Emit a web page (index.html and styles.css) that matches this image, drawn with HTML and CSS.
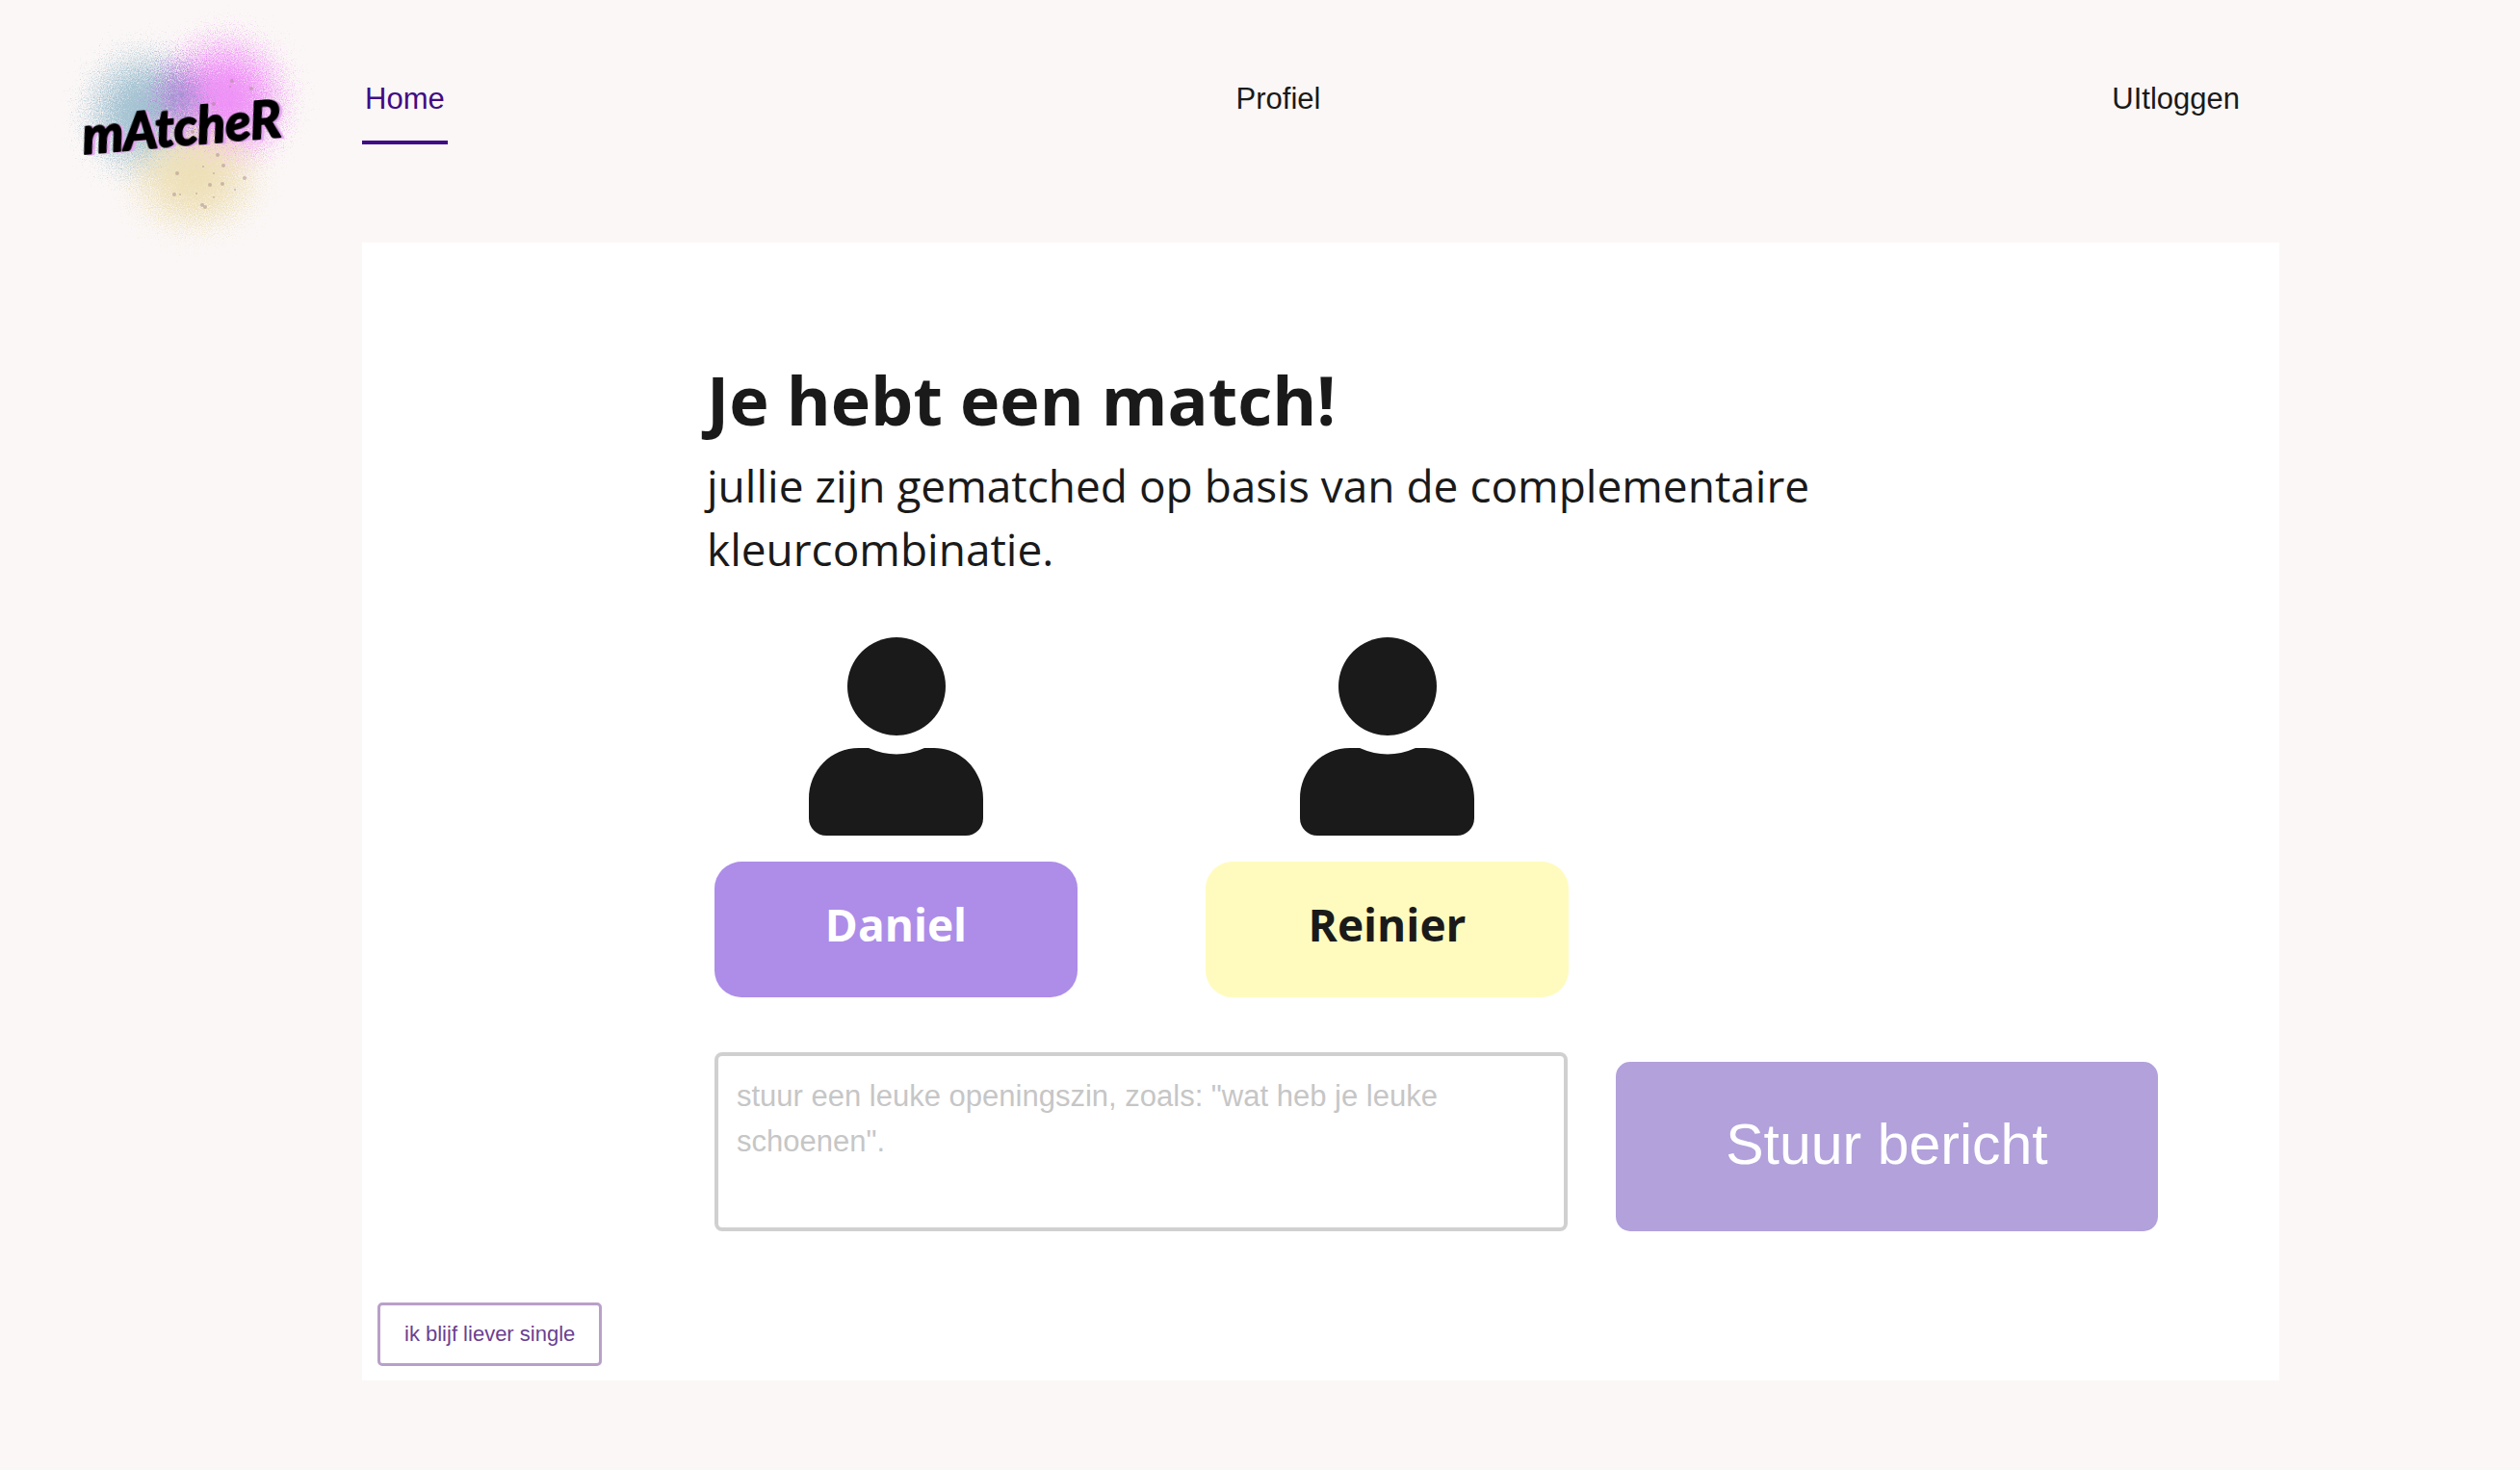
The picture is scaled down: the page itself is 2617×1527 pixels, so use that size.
FILE: index.html
```html
<!DOCTYPE html>
<html lang="nl">
<head>
  <meta charset="utf-8">
  <meta name="viewport" content="width=device-width, initial-scale=1">
  <title>Matcher</title>
  <link rel="stylesheet" href="styles.css">
</head>
<body>
  <header class="header">
    <a class="logo" href="#">
      <svg class="logo-art" viewBox="0 0 280 240" role="img" aria-label="Matcher">
        <defs>
          <radialGradient id="blue"><stop offset="0" stop-color="#9fc0d0"/><stop offset=".4" stop-color="#a7c4d3" stop-opacity=".95"/><stop offset="1" stop-color="#b4ccd8" stop-opacity="0"/></radialGradient>
          <radialGradient id="pink"><stop offset="0" stop-color="#ee8df7"/><stop offset=".4" stop-color="#ef96f6" stop-opacity=".95"/><stop offset="1" stop-color="#f1a9f6" stop-opacity="0"/></radialGradient>
          <radialGradient id="sand"><stop offset="0" stop-color="#ecdfb4"/><stop offset=".4" stop-color="#eee0b9" stop-opacity=".9"/><stop offset="1" stop-color="#f1e6c8" stop-opacity="0"/></radialGradient>
          <radialGradient id="violet"><stop offset="0" stop-color="#9a86cc" stop-opacity=".9"/><stop offset="1" stop-color="#a38fd0" stop-opacity="0"/></radialGradient>
          <filter id="spray" x="-20%" y="-20%" width="140%" height="140%" color-interpolation-filters="sRGB">
            <feTurbulence type="fractalNoise" baseFrequency="0.9" numOctaves="2" seed="4"/>
            <feDisplacementMap in="SourceGraphic" scale="80" xChannelSelector="R" yChannelSelector="G"/>
          </filter>
        </defs>
        <g filter="url(#spray)">
          <ellipse cx="102" cy="108" rx="74" ry="76" fill="url(#blue)"/>
          <ellipse cx="182" cy="94" rx="78" ry="78" fill="url(#pink)"/>
          <ellipse cx="152" cy="174" rx="80" ry="68" fill="url(#sand)"/>
          <ellipse cx="136" cy="90" rx="34" ry="44" fill="url(#violet)"/>
        </g>
        <g fill="#a58a86" fill-opacity=".5">
          <circle cx="191" cy="74" r="2"/><circle cx="189" cy="80" r="1"/><circle cx="211" cy="82" r="2"/><circle cx="172" cy="98" r="2"/>
          <circle cx="176" cy="151" r="2"/><circle cx="182" cy="162" r="2"/><circle cx="161" cy="163" r="1"/><circle cx="204" cy="175" r="2"/>
          <circle cx="134" cy="170" r="2"/><circle cx="172" cy="170" r="1"/><circle cx="168" cy="182" r="2"/><circle cx="181" cy="181" r="2"/>
          <circle cx="131" cy="192" r="2"/><circle cx="137" cy="192" r="1"/><circle cx="154" cy="191" r="1"/><circle cx="172" cy="195" r="1"/>
          <circle cx="160" cy="203" r="2"/><circle cx="163" cy="205" r="2"/><circle cx="194" cy="187" r="1"/><circle cx="150" cy="127" r="2"/>
        </g>
        <text class="wordmark" x="37" y="150" transform="rotate(-5 37 150)">mAtcheR</text>
      </svg>
    </a>
    <nav class="nav">
      <a class="nav-link nav-link-active" href="#" aria-current="page">Home</a>
      <a class="nav-link" href="#">Profiel</a>
      <a class="nav-link" href="#">UItloggen</a>
    </nav>
  </header>

  <main class="card">
    <section class="match">
      <h1 class="title">Je hebt een match!</h1>
      <p class="intro">jullie zijn gematched op basis van de complementaire kleurcombinatie.</p>

      <div class="people">
        <div class="person">
          <svg class="avatar" viewBox="0 0 182 206" aria-hidden="true">
            <circle cx="91" cy="51" r="51"/>
            <path d="M52 115H62Q91 128 120 115H130C158 115 181 138 181 168V188A18 18 0 0 1 163 206H18A18 18 0 0 1 0 188V168C0 138 23 115 52 115Z"/>
          </svg>
          <p class="name name-purple">Daniel</p>
        </div>
        <div class="person">
          <svg class="avatar" viewBox="0 0 182 206" aria-hidden="true">
            <circle cx="91" cy="51" r="51"/>
            <path d="M52 115H62Q91 128 120 115H130C158 115 181 138 181 168V188A18 18 0 0 1 163 206H18A18 18 0 0 1 0 188V168C0 138 23 115 52 115Z"/>
          </svg>
          <p class="name name-yellow">Reinier</p>
        </div>
      </div>

      <form class="message">
        <textarea class="message-text" aria-label="Openingszin" placeholder="stuur een leuke openingszin, zoals: &quot;wat heb je leuke schoenen&quot;."></textarea>
        <button class="send" type="button">Stuur bericht</button>
      </form>
    </section>
    <button class="decline" type="button">ik blijf liever single</button>
  </main>
</body>
</html>
```
FILE: styles.css
```css
* {
  box-sizing: border-box;
}

body {
  margin: 0;
  background: #fbf7f6;
  color: #1a1a1a;
  font-family: "Liberation Sans", Arial, sans-serif;
}

.header {
  display: flex;
  align-items: flex-start;
  min-height: 252px;
  padding-right: 288px;
}

.logo {
  flex: 0 0 376px;
  padding: 10px 0 0 50px;
}

.logo-art {
  display: block;
  width: 280px;
  overflow: visible;
}

.wordmark {
  fill: #000;
  stroke: #000;
  stroke-width: 2;
  stroke-linejoin: round;
  font-family: Lato, sans-serif;
  font-size: 54px;
  font-style: italic;
  font-weight: 700;
  filter: drop-shadow(3px 1px 0 #e3a9f0);
}

.nav {
  display: flex;
  flex: 1;
  justify-content: space-between;
  padding-top: 85px;
}

.nav-link {
  padding: 0 3px 25px;
  border-bottom: 4px solid transparent;
  color: #1a1a1a;
  font-size: 31px;
  line-height: 36px;
  text-decoration: none;
}

.nav-link-active {
  border-color: #400c84;
  color: #400c84;
}

.card {
  margin: 0 250px 93px 376px;
  padding: 115px 126px 15px 16px;
  background: #fff;
}

.match {
  padding-left: 342px;
}

.title {
  margin: 0 0 8px;
  font-family: "Open Sans", sans-serif;
  font-size: 70px;
  font-weight: 700;
  line-height: 96px;
}

.intro {
  margin: 0;
  font-family: "Open Sans", sans-serif;
  font-size: 46px;
  line-height: 66px;
}

.people {
  display: flex;
  gap: 133px;
  padding: 59px 0 57px 8px;
}

.person {
  display: flex;
  flex-direction: column;
  align-items: center;
  gap: 27px;
  width: 377px;
}

.avatar {
  width: 182px;
  fill: #1a1a1a;
}

.name {
  width: 100%;
  margin: 0;
  padding: 32px 0 43px;
  border-radius: 28px;
  font-family: "Open Sans", sans-serif;
  font-size: 46px;
  font-weight: 700;
  line-height: 66px;
  text-align: center;
}

.name-purple {
  background: #ad8de8;
  color: #fff;
}

.name-yellow {
  background: #fffbbf;
}

.message {
  display: flex;
  align-items: flex-end;
  gap: 50px;
  padding-left: 8px;
}

.message-text {
  flex: 1;
  height: 186px;
  padding: 18px 19px;
  border: 4px solid #d0d0d0;
  border-radius: 8px;
  background: #fff;
  color: #1a1a1a;
  font: 31px/47px "Liberation Sans", Arial, sans-serif;
  resize: none;
}

.message-text::placeholder {
  color: #c6c6c6;
  opacity: 1;
}

.send {
  flex: 0 0 563px;
  height: 176px;
  padding: 0 0 4px;
  border: 0;
  border-radius: 15px;
  background: #b2a1db;
  color: #fff;
  font: 59px/68px "Liberation Sans", Arial, sans-serif;
}

.decline {
  display: block;
  margin-top: 74px;
  padding: 17px 25px;
  border: 3px solid #b9a0c8;
  border-radius: 5px;
  background: #fff;
  color: #6b3f90;
  font: 22px/26px "Liberation Sans", Arial, sans-serif;
}
```
